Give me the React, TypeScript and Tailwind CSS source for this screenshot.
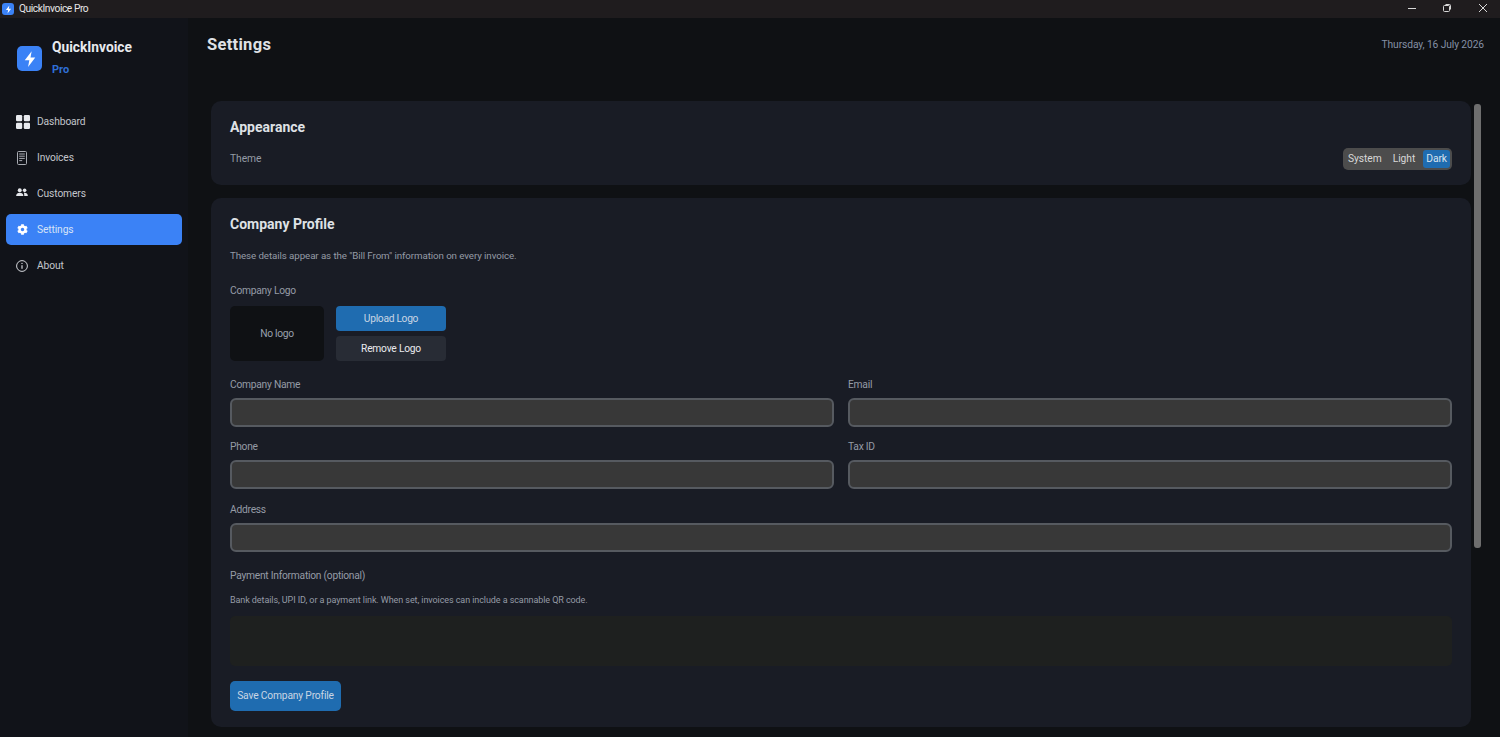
import React from "react";
import { FaCog } from "react-icons/fa";

function Bolt({ size }: { size: number }) {
  return (
    <svg width={size} height={size} viewBox="0 0 24 24" fill="#ffffff">
      <path d="M14.2 1.5 5 13.6h6.1L9.4 22.5l9.6-12.6h-6.3z" />
    </svg>
  );
}

function DashIcon() {
  return (
    <svg width="14" height="14" viewBox="0 0 14 14" fill="#e8eaee">
      <rect x="0" y="0" width="6.2" height="6.2" rx="1.2" />
      <rect x="7.8" y="0" width="6.2" height="6.2" rx="1.2" />
      <rect x="0" y="7.8" width="6.2" height="6.2" rx="1.2" />
      <rect x="7.8" y="7.8" width="6.2" height="6.2" rx="1.2" />
    </svg>
  );
}

function InvoiceIcon() {
  return (
    <svg className="ml-[1px]" width="10" height="14" viewBox="0 0 10 14" fill="none" stroke="#a9acb3" strokeWidth="1">
      <rect x="0.5" y="0.5" width="9" height="13" rx="1" />
      <path d="M2.2 3h5.600M2.2 5.200h5.600M2.2 7.400h5.600M2.2 9.600h3" />
    </svg>
  );
}

function UsersIcon() {
  return (
    <svg className="mb-[3px]" width="12" height="9" viewBox="0 0 13 10" fill="#e4e6ea">
      <circle cx="4" cy="2.400" r="2.200" />
      <circle cx="9.400" cy="2.600" r="2" />
      <path d="M0 9c0-2.400 1.700-3.600 4-3.600S8 6.600 8 9z" />
      <path d="M8.600 5.400c2.400-.3 4.400.9 4.400 3.600H9c0-1.500-.1-2.600-.4-3.600z" />
    </svg>
  );
}

function InfoIcon() {
  return (
    <svg width="12" height="12" viewBox="0 0 12 12" fill="none" stroke="#d4d6db" strokeWidth="1">
      <circle cx="6" cy="6" r="5.400" />
      <path d="M6 5.200v3.600" strokeWidth="1.200" />
      <circle cx="6" cy="3.400" r="0.700" fill="#d4d6db" stroke="none" />
    </svg>
  );
}

const nav = [
  { label: "Dashboard", icon: <DashIcon /> },
  { label: "Invoices", icon: <InvoiceIcon /> },
  { label: "Customers", icon: <UsersIcon /> },
  { label: "Settings", icon: <FaCog className="ml-[1px] text-white" size={11} />, active: true },
  { label: "About", icon: <InfoIcon /> },
];

function Field({ label }: { label: string }) {
  return (
    <div className="flex flex-col">
      <div className="h-[14px] mb-[6px] text-[10.250px] tracking-[-0.25px] leading-[14px] text-[#959ba6]">{label}</div>
      <div className="h-[29px] rounded-[6px] border-2 border-[#565a60] bg-[#383838]" />
    </div>
  );
}

export default function App() {
  return (
    <div className="h-[737px] w-[1500px] flex flex-col overflow-hidden bg-[#0f1114] font-['Roboto',sans-serif]">
      <div className="h-[18px] shrink-0 flex items-center bg-[#1f1c1e]">
        <div className="ml-[2px] w-[12px] h-[12px] rounded-[3px] bg-[#3b82f6] flex items-center justify-center">
          <Bolt size={9} />
        </div>
        <span className="ml-[5px] text-[10.250px] tracking-[-0.45px] text-[#e6e6e6]">QuickInvoice Pro</span>
        <div className="ml-auto flex items-center text-[#d8d8d8]">
          <svg className="mr-[25px] mb-[2px]" width="10" height="10" viewBox="0 0 10 10" stroke="currentColor" fill="none">
            <path d="M1 5.500h8" />
          </svg>
          <svg className="mr-[26px] mb-[2px]" width="10" height="10" viewBox="0 0 10 10" stroke="currentColor" fill="none">
            <rect x="1.500" y="2.500" width="6" height="6" rx="1" />
            <path d="M3.500 1.500h4a1 1 0 0 1 1 1v4" />
          </svg>
          <svg className="mr-[12px] mb-[2px]" width="10" height="10" viewBox="0 0 10 10" stroke="currentColor" fill="none">
            <path d="M1 1l8 8M9 1l-8 8" />
          </svg>
        </div>
      </div>

      <div className="flex flex-1 min-h-0">
        <aside className="w-[188px] shrink-0 bg-[#111319] flex flex-col">
          <div className="flex items-start pl-[17px] pt-[20px] h-[88px]">
            <div className="mt-[8px] w-[25px] h-[25px] rounded-[5px] bg-[#3b82f6] flex items-center justify-center">
              <Bolt size={18} />
            </div>
            <div className="ml-[10px] flex flex-col">
              <div className="text-[13.750px] leading-[18px] font-bold text-[#e8eaee]">QuickInvoice</div>
              <div className="mt-[7px] text-[11px] leading-[14px] font-bold text-[#2f6fd6]">Pro</div>
            </div>
          </div>
          <nav className="flex flex-col gap-[5px] px-[6px]">
            {nav.map((n) => (
              <div
                key={n.label}
                className={
                  n.active
                    ? "h-[31px] rounded-[5px] bg-[#3b82f6] flex items-center text-[#d6e2f7]"
                    : "h-[31px] rounded-[5px] flex items-center text-[#c3c6cc]"
                }
              >
                <div className="w-[31px] pl-[10px] flex items-center">{n.icon}</div>
                <span className="text-[10.250px] tracking-[-0.12px]">{n.label}</span>
              </div>
            ))}
          </nav>
        </aside>

        <main className="flex-1 min-w-0 flex flex-col">
          <div className="h-[83px] shrink-0 flex items-start justify-between pl-[19px] pr-[16px]">
            <h1 className="mt-[16px] text-[16.500px] leading-[22px] font-bold text-[#dfe1e5] tracking-[0.3px]">Settings</h1>
            <div className="mt-[20px] text-[10.250px] tracking-[-0.1px] leading-[14px] text-[#8490a5]">Thursday, 16 July 2026</div>
          </div>

          <div className="flex flex-1 min-h-0 pl-[23px]">
            <div className="w-[1260px] shrink-0 flex flex-col gap-[13px]">
              <section className="h-[84px] rounded-[10px] bg-[#191c25] px-[19px] pt-[18px]">
                <h2 className="text-[14px] leading-[16px] font-bold text-[#dfe1e5]">Appearance</h2>
                <div className="mt-[9px] flex items-center justify-between h-[30px]">
                  <span className="text-[10.250px] tracking-[-0.05px] text-[#959ba6]">Theme</span>
                  <div className="h-[22px] flex items-center rounded-[5px] bg-[#4c4c4c] p-[2px] text-[10.250px] tracking-[-0.05px] text-[#d8d8d8]">
                    <span className="px-[3px]">System</span>
                    <span className="px-[3px] ml-[5px]">Light</span>
                    <span className="ml-[5px] h-[18px] px-[3px] rounded-[3px] bg-[#1f6cb0] text-[#dbe4ee] flex items-center">Dark</span>
                  </div>
                </div>
              </section>

              <section className="h-[529px] rounded-[10px] bg-[#191c25] px-[19px] pt-[18px]">
                <h2 className="text-[14px] leading-[16px] font-bold text-[#dfe1e5]">Company Profile</h2>
                <p className="mt-[17px] text-[9.750px] tracking-[-0.09px] leading-[14px] text-[#959ba6]">
                  These details appear as the "Bill From" information on every invoice.
                </p>
                <div className="mt-[21px] h-[14px] text-[10.250px] tracking-[-0.25px] leading-[14px] text-[#959ba6]">Company Logo</div>
                <div className="mt-[8px] flex gap-[12px]">
                  <div className="w-[94px] h-[55px] rounded-[5px] bg-[#0f1114] flex items-center justify-center text-[10.250px] tracking-[-0.28px] text-[#98a0ac]">
                    No logo
                  </div>
                  <div className="flex flex-col gap-[5px]">
                    <div className="w-[110px] h-[25px] rounded-[4px] bg-[#1f6cb0] flex items-center justify-center text-[10.250px] tracking-[-0.3px] text-[#c9d6e4]">
                      Upload Logo
                    </div>
                    <div className="w-[110px] h-[25px] rounded-[4px] bg-[#282c35] flex items-center justify-center text-[10.250px] tracking-[-0.22px] text-[#e8eaee]">
                      Remove Logo
                    </div>
                  </div>
                </div>

                <div className="mt-[17px] grid grid-cols-2 gap-x-[14px] gap-y-[13px] w-[1222px]">
                  <Field label="Company Name" />
                  <Field label="Email" />
                  <Field label="Phone" />
                  <Field label="Tax ID" />
                  <div className="col-span-2 mt-[1px]">
                    <Field label="Address" />
                  </div>
                </div>

                <div className="mt-[17px] h-[14px] text-[10.250px] tracking-[-0.25px] leading-[14px] text-[#959ba6]">Payment Information (optional)</div>
                <p className="mt-[11px] text-[9px] tracking-[-0.08px] leading-[12px] text-[#959ba6]">
                  Bank details, UPI ID, or a payment link. When set, invoices can include a scannable QR code.
                </p>
                <div className="mt-[10px] w-[1222px] h-[50px] rounded-[5px] bg-[#1e201f]" />
                <div className="mt-[15px] w-[111px] h-[30px] rounded-[5px] bg-[#1f6cb0] flex items-center justify-center text-[10.250px] tracking-[-0.17px] text-[#c9d6e4]">
                  Save Company Profile
                </div>
              </section>
            </div>
            <div className="ml-[3px] mt-[3px] w-[7px] h-[444px] rounded-[3px] bg-[#6e6e6e]" />
          </div>
        </main>
      </div>
    </div>
  );
}
